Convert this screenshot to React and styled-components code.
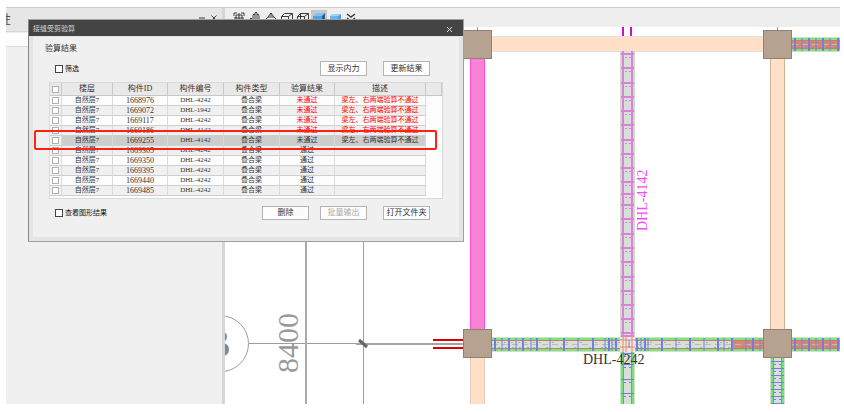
import React, { useState } from 'react';
import styled, { createGlobalStyle, css } from 'styled-components';

const GlobalStyle = createGlobalStyle`
  * {
    box-sizing: border-box;
  }

  body {
    margin: 0;
    background: #fff;
    color: #333;
    font-family: "Liberation Serif", "Noto Sans CJK SC", sans-serif;
    font-size: 7px;
  }

  button,
  input {
    margin: 0;
    font: inherit;
  }
`;

const Workspace = styled.div`
  position: relative;
  display: flex;
  min-height: 100vh;
  padding: 7px 4px 8px 6px;
`;

const SidePanel = styled.aside`
  flex: 0 0 219px;
  border-top: 1px solid #cdcdcd;
  border-right: 3px solid #d6d6d6;
  background: #f0f0f0;
`;

const PanelHeader = styled.header`
  display: flex;
  align-items: flex-start;
  height: 24px;
  padding: 4px 2px 0 0;
  border-bottom: 1px solid #d8d8d8;
  background: #e6e6e6;
`;

const PanelTitle = styled.h2`
  display: flex;
  justify-content: flex-end;
  width: 5px;
  margin: 0 auto 0 0;
  overflow: hidden;
  color: #35585c;
  font-size: 12px;
  font-weight: 400;
  line-height: 16px;
`;

const PanelButton = styled.button`
  display: flex;
  width: 12px;
  height: 12px;
  padding: 3px;
  border: 0;
  background: none;

  svg {
    width: 6px;
    height: 6px;
  }
`;

const PanelStrip = styled.div`
  height: 14px;
  margin-top: 1px;
  border-bottom: 1px solid #dcdcdc;
  background: #fdfdfd;
`;

const MainArea = styled.main`
  display: flex;
  flex: 1;
  flex-direction: column;
  min-width: 0;
`;

const Toolbar = styled.div`
  display: flex;
  flex: 0 0 20px;
  padding: 2px 6px 0;
  border-top: 1px solid #cdcdcd;
  background: #eee;
`;

const ToolButton = styled.button`
  display: flex;
  justify-content: center;
  width: 16px;
  height: 16px;
  padding: 2px;
  border: 0;
  background: ${props => (props.$active ? '#c8c8c8' : 'none')};

  svg {
    width: 12px;
    height: 12px;
  }
`;

const Drawing = styled.svg`
  display: block;
  flex: 1;
  width: 100%;
  min-height: 0;
`;

const Window = styled.section`
  position: absolute;
  top: 19px;
  left: 28px;
  width: calc(100% - 56px);
  max-width: 436px;
  border: 1px solid #a0a0a0;
  border-left-color: #858585;
  background: #e4e4e4;
`;

const TitleBar = styled.header`
  display: flex;
  align-items: center;
  justify-content: space-between;
  height: 16px;
  padding: 0 10px 0 4px;
  background: #444;
  color: #d0d0d0;
`;

const WindowTitle = styled.h1`
  margin: 0;
  font-size: 7px;
  font-weight: 400;
`;

const CloseButton = styled.button`
  display: flex;
  width: 7px;
  height: 12px;
  padding: 5px 1px 2px;
  border: 0;
  background: none;
`;

const WindowBody = styled.div`
  margin: 1px 4px 4px;
  padding: 7px 0 17px;
  background: #f0f0f0;
`;

const SectionTitle = styled.h2`
  margin: 0 12px 7px;
  font-size: 8px;
  font-weight: 400;
  line-height: 10px;
`;

const ActionRow = styled.div`
  display: flex;
  align-items: center;
  gap: ${props => (props.$wide ? '16px' : '11px')};
  padding: 0 29px 0 22px;
`;

const CheckLabel = styled.label`
  display: flex;
  align-items: center;
  gap: 2px;
  margin-right: auto;
  color: #111;
  line-height: 10px;
`;

const CheckBox = styled.input.attrs({ type: 'checkbox' })`
  appearance: none;
  display: block;
  flex: none;
  width: ${props => (props.$small ? '7px' : '8px')};
  height: ${props => (props.$small ? '7px' : '8px')};
  border: 1px solid ${props => (props.$small ? '#b0b0b0' : '#444')};
  background: #fff;

  &:checked {
    background: #555;
  }
`;

const PushButton = styled.button`
  width: 47px;
  height: ${props => (props.$low ? '14px' : '15px')};
  margin-left: ${props => (props.$apart ? '5px' : '0')};
  padding: 0;
  border: 1px solid #b4b4b4;
  background: #fdfdfd;
  color: #333;
  font-size: 8px;
  line-height: 10px;
  white-space: nowrap;

  &:disabled {
    color: #aaa;
  }
`;

const TableFrame = styled.div`
  margin: 6px 16px 7px;
  padding-bottom: 2px;
  border: 1px solid #d9d9d9;
  background: #fdfdfd;
`;

const Table = styled.table`
  width: 100%;
  table-layout: fixed;
  border-spacing: 0;
`;

const HeadCell = styled.th`
  height: 13px;
  padding: 0;
  border-right: 1px solid #c8c8c8;
  border-bottom: 1px solid #c8c8c8;
  background: #e9e9e9;
  font-size: 8px;
  font-weight: 400;
  line-height: 12px;
  white-space: nowrap;

  input {
    margin: 0 auto;
  }
`;

const Cell = styled.td`
  height: 10px;
  padding: 0;
  overflow: hidden;
  border-right: 1px solid #dadada;
  border-bottom: 1px solid #cfcfcf;
  color: ${props => (props.$failed ? '#f00' : '#333')};
  line-height: 9px;
  text-align: center;
  white-space: nowrap;
  ${props => props.$number && css`font-size: 8px;`}

  input {
    margin: 0 auto;
  }
`;

const Row = styled.tr`
  ${Cell} {
    background: #fdfdfd;
  }

  &:nth-child(even) ${Cell} {
    background: #f0f0f0;
  }

  ${props => props.$selected && css`
    && ${Cell} {
      background: #cdcdcd;
    }

    && ${Cell}:first-child {
      background: #f0f0f0;
    }
  `}
`;

const Highlight = styled.div`
  position: absolute;
  top: 110px;
  right: 26px;
  left: 5px;
  height: 20px;
  border: 2px solid #ff2213;
  border-radius: 2px;
  pointer-events: none;
`;

const columns = [
  { label: '楼层', width: 51 },
  { label: '构件ID', width: 55 },
  { label: '构件编号', width: 56 },
  { label: '构件类型', width: 56 },
  { label: '验算结果', width: 55 },
  { label: '描述', width: 91 },
];

const FAIL_NOTE = '梁左、右两端验算不通过';

const members = [
  { id: '1668976', code: 'DHL-4242', failed: true },
  { id: '1669072', code: 'DHL-1942', failed: true },
  { id: '1669117', code: 'DHL-4242', failed: true },
  { id: '1669186', code: 'DHL-4142', failed: true },
  { id: '1669255', code: 'DHL-4142', failed: true },
  { id: '1669305', code: 'DHL-4242', failed: false },
  { id: '1669350', code: 'DHL-4242', failed: false },
  { id: '1669395', code: 'DHL-4242', failed: false },
  { id: '1669440', code: 'DHL-4242', failed: false },
  { id: '1669485', code: 'DHL-4242', failed: false },
];

const tools = [
  {
    name: '全图',
    icon: <path d="M1 4V1h3M8 1h3v3M1 8v3h3M8 11h3V8M6 1v10M1 6h10M3 3h6v6H3z" />,
  },
  {
    name: '平移',
    icon: <path d="M3 11 1 7l1-1 2 2V3l1-1 1 1V1l1-1 1 1v2l1-1 1 2v5l-2 3M6 3v4M8 3v4" />,
  },
  {
    name: '旋转',
    icon: <path d="m6 1 3 4H3zM3 5 1 7l3 3h5l2-3-2-2M4 8h4M6 1v3" />,
  },
  {
    name: '线框',
    icon: <path d="M.5 4.5h7v7h-7zM.5 4.5l3-3h8l-4 3M11.500 1.500v7l-4 3" />,
  },
  {
    name: '消隐',
    icon: <path d="M.5 4.5h7v7h-7zM.5 4.5l3-3h8l-4 3M11.500 1.500v7l-4 3M3.500 1.500v7h8M3.500 8.500l-3 3" />,
  },
  {
    name: '着色',
    active: true,
    icon: (
      <g stroke="none">
        <path d="M0 4h9v8H0z" fill="#4ba3e8" />
        <path d="m0 4 3-3h9L9 4z" fill="#7cc4f7" />
        <path d="m9 4 3-3v8l-3 3z" fill="#245e91" />
      </g>
    ),
  },
  {
    name: '真实',
    icon: (
      <g stroke="none">
        <path d="M1 4h8v8H1z" fill="#65b7fa" />
        <path d="m1 4 2-2h9L9 4z" fill="#9bd3ff" />
        <path d="m9 4 3-2v8l-3 2z" fill="#4d9fe5" />
      </g>
    ),
  },
  {
    name: '更多',
    icon: <path d="m2 2 4 3 4-3M2 6l4 3 4-3" strokeWidth="1.500" />,
  },
];

const stirrupsV = [54, 68, 83, 97, 111, 125, 140, 154, 168, 182, 194, 205, 219, 234, 248, 262, 277, 291, 305, 319, 333, 336];
const stirrupsLeft = [495, 502, 509, 516, 523, 531, 537, 550, 564, 578, 593, 605, 609, 612, 616];
const stirrupsRight = [637, 641, 645, 648, 662, 676, 690, 704, 718, 724, 732, 746, 753, 760];
const stirrupsEnd = [795, 802, 809, 816, 823, 830, 838];
const stirrupsDownMid = [353, 364, 379, 393];
const stirrupsDownRight = [361, 368, 375, 382, 389, 396, 403];

function Icon({ children }) {
  return (
    <svg viewBox="0 0 12 12" fill="none" stroke="#3a3a3a" strokeWidth="1" aria-hidden="true">
      {children}
    </svg>
  );
}

function BeamH({ x, y, length, bars, solidFrom }) {
  return (
    <g>
      <rect x={x} y={y} width={length} height="15" fill="#cfe2cf" />
      <rect x={x} y={y + 3} width={length} height="9" fill="#d8dfd8" />
      {solidFrom && <rect x={solidFrom} y={y + 4} width={x + length - solidFrom} height="7" fill="#d98674" />}
      <path d={`M${x} ${y + 2}h${length}M${x} ${y + 13}h${length}`} stroke="#7be67b" strokeWidth="2" />
      <path d={`M${x} ${y + 3.5}h${length}M${x} ${y + 11.5}h${length}`} stroke="#cf7b69" />
      <path d={`M${x} ${y + 7.5}h${length}`} stroke="#b4c2b4" strokeDasharray="6 4" />
      {bars.map((bar, i) => (
        <g key={bar} stroke="#7080e2">
          <path d={`M${bar} ${y + 1}v13`} strokeWidth={i % 2 ? 1 : 2} />
          <path d={`M${bar + 3} ${y + 5}v1M${bar - 3} ${y + 10}v1`} />
        </g>
      ))}
    </g>
  );
}

function BeamV({ x, y, length, bars }) {
  return (
    <g>
      <rect x={x} y={y} width="15" height={length} fill="#cfe2cf" />
      <rect x={x + 4} y={y} width="7" height={length} fill="#d8dfd8" />
      <path d={`M${x + 2} ${y}v${length}M${x + 13} ${y}v${length}`} stroke="#6fe66f" strokeWidth="2" />
      <path d={`M${x + 3.5} ${y}v${length}M${x + 11.5} ${y}v${length}`} stroke="#cf7b69" />
      {bars.map(bar => (
        <g key={bar} stroke="#7080e2">
          <path d={`M${x + 1} ${bar + 0.5}h13`} />
          <path d={`M${x + 4} ${bar + 3.5}h2M${x + 9} ${bar + 3.5}h2`} />
        </g>
      ))}
    </g>
  );
}

function Pillar({ x, y }) {
  return <rect x={x + 0.5} y={y + 0.5} width="28" height="28" fill="#b5a291" stroke="#94806f" />;
}

function FloorPlan() {
  return (
    <Drawing viewBox="225 27 615 377" preserveAspectRatio="xMinYMin slice" role="img" aria-label="梁平面图">
      <g fill="none" stroke="#9c9c9c">
        <circle cx="220.5" cy="343.7" r="28" />
        <path d="M249 343.5h108" />
        <path d="M306 27v377" strokeWidth="2" stroke="#aaa" />
        <path d="M363.5 27v377" />
        <path d="M356 344h107" strokeWidth="2" stroke="#a4a4a4" />
        <path d="m359 340 8 7" strokeWidth="3" stroke="#666" />
        <path d="M477.5 27v3M777.5 27v3" />
      </g>
      <g fill="#999" fontFamily="Liberation Serif, serif">
        <text x="230" y="357" fontSize="40" fontWeight="700" textAnchor="end" fill="#888">B</text>
        <text transform="translate(298 373) rotate(-90)" fontSize="30">8400</text>
      </g>
      <path d="M433 340h30M433 348h30" stroke="#d90000" strokeWidth="2" />

      <g>
        <rect x="492" y="36" width="271" height="16" fill="#e4e0dc" />
        <rect x="492" y="37" width="271" height="14" fill="#ffdfc6" />
        <rect x="470" y="59" width="15" height="270" fill="#f784d3" />
        <path d="M470.5 59v270M484.5 59v270" stroke="#ff4ddf" />
        <rect x="470" y="358" width="15" height="46" fill="#ffdfc6" />
        <path d="M470.5 358v46M484.5 358v46" stroke="#e4cbb8" />
        <rect x="770" y="59" width="15" height="270" fill="#ffdfc6" />
        <path d="M770.5 59v270M784.5 59v270" stroke="#d3b093" />
      </g>

      <BeamH x={792} y={37} length={48} bars={stirrupsEnd} solidFrom={792} />
      <BeamH x={492} y={337} length={128} bars={stirrupsLeft} />
      <BeamH x={635} y={337} length={128} bars={stirrupsRight} solidFrom={732} />
      <BeamH x={792} y={337} length={48} bars={stirrupsEnd} solidFrom={792} />
      <BeamV x={620} y={352} length={52} bars={stirrupsDownMid} />
      <BeamV x={770} y={358} length={46} bars={stirrupsDownRight} />

      <path d="M623 27v9M631 27v9" stroke="#cf0fcf" strokeWidth="2" />
      <rect x="620" y="51" width="15" height="286" fill="#cbdccb" />
      <rect x="622" y="51" width="11" height="286" fill="#d8dfd8" />
      <g stroke="#dc80dc" strokeWidth="2">
        <path d="M623 51v286M632 51v286" />
        {stirrupsV.map(y => (
          <g key={y}>
            <path d={`M621 ${y}h13`} />
            <path d={`M625 ${y + 3.5}h2M629 ${y + 3.5}h2`} strokeWidth="1" />
          </g>
        ))}
      </g>
      <rect x="620" y="337" width="15" height="15" fill="#eee9d8" />
      <path d="M623 337v15M626 337v15M632 337v15M620 340h15M620 347h15" stroke="#d98a76" />
      <path d="M629 340v8" stroke="#7080e2" />

      <Pillar x={463} y={30} />
      <Pillar x={763} y={30} />
      <Pillar x={463} y={329} />
      <Pillar x={763} y={329} />

      <g fontFamily="Liberation Serif, serif" fontSize="14">
        <text x="583" y="364" fill="#333">DHL-4242</text>
        <text transform="translate(647 231) rotate(-90)" fill="#f24df2">DHL-4142</text>
      </g>
    </Drawing>
  );
}

function ResultTable() {
  const [selected, setSelected] = useState('1669255');

  return (
    <TableFrame>
      <Table>
        <colgroup>
          <col width="12" />
          {columns.map(column => <col key={column.label} width={column.width} />)}
          <col width="16" />
        </colgroup>
        <thead>
          <tr>
            <HeadCell><CheckBox $small aria-label="全选" /></HeadCell>
            {columns.map(column => <HeadCell key={column.label}>{column.label}</HeadCell>)}
            <HeadCell />
          </tr>
        </thead>
        <tbody>
          {members.map(member => {
            const active = member.id === selected;
            const red = member.failed && !active;
            return (
              <Row key={member.id} $selected={active} onClick={() => setSelected(member.id)}>
                <Cell><CheckBox $small aria-label={member.id} /></Cell>
                <Cell>自然层7</Cell>
                <Cell $number>{member.id}</Cell>
                <Cell>{member.code}</Cell>
                <Cell>叠合梁</Cell>
                <Cell $failed={red}>{member.failed ? '未通过' : '通过'}</Cell>
                <Cell $failed={red}>{member.failed ? FAIL_NOTE : ''}</Cell>
              </Row>
            );
          })}
        </tbody>
      </Table>
    </TableFrame>
  );
}

export default function App() {
  return (
    <>
      <GlobalStyle />
      <Workspace>
        <SidePanel>
          <PanelHeader>
            <PanelTitle>性</PanelTitle>
            <PanelButton aria-label="最小化"><Icon><path d="M0 6h12" strokeWidth="2" /></Icon></PanelButton>
            <PanelButton aria-label="关闭面板"><Icon><path d="m1 1 10 10M11 1 1 11" strokeWidth="2" /></Icon></PanelButton>
          </PanelHeader>
          <PanelStrip />
        </SidePanel>
        <MainArea>
          <Toolbar>
            {tools.map(tool => (
              <ToolButton key={tool.name} $active={tool.active} aria-label={tool.name}>
                <Icon>{tool.icon}</Icon>
              </ToolButton>
            ))}
          </Toolbar>
          <FloorPlan />
        </MainArea>

        <Window>
          <TitleBar>
            <WindowTitle>接缝受剪验算</WindowTitle>
            <CloseButton aria-label="关闭">
              <svg width="5" height="5" viewBox="0 0 5 5" stroke="#ddd" aria-hidden="true">
                <path d="m0 0 5 5M5 0 0 5" />
              </svg>
            </CloseButton>
          </TitleBar>
          <WindowBody>
            <SectionTitle>验算结果</SectionTitle>
            <ActionRow $wide>
              <CheckLabel><CheckBox />筛选</CheckLabel>
              <PushButton>显示内力</PushButton>
              <PushButton>更新结果</PushButton>
            </ActionRow>
            <ResultTable />
            <ActionRow>
              <CheckLabel><CheckBox />查看图形结果</CheckLabel>
              <PushButton $low>删除</PushButton>
              <PushButton $low disabled>批量输出</PushButton>
              <PushButton $low $apart>打开文件夹</PushButton>
            </ActionRow>
          </WindowBody>
          <Highlight />
        </Window>
      </Workspace>
    </>
  );
}
